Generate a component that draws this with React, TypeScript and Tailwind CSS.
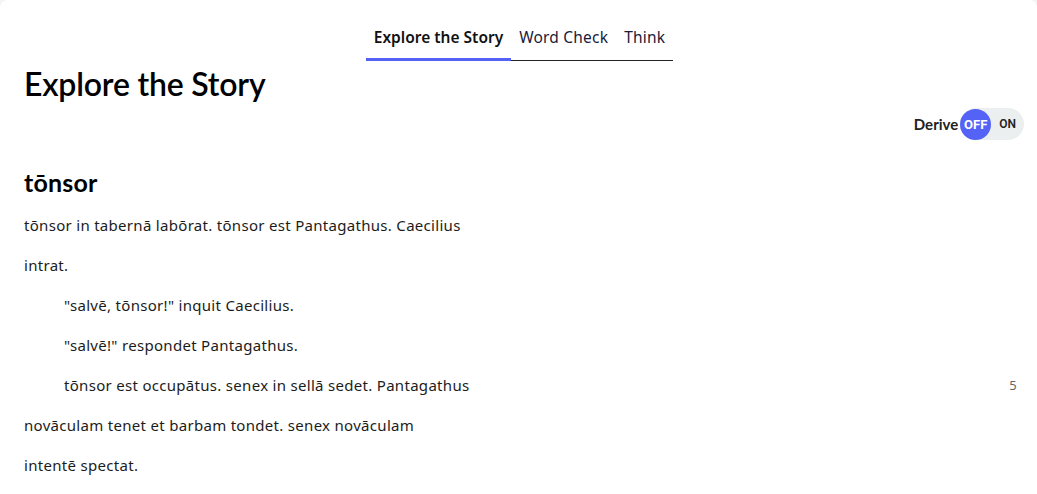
import React from "react";

const lines: { text: string; indent?: boolean; num?: string }[] = [
  { text: "tōnsor in tabernā labōrat. tōnsor est Pantagathus. Caecilius" },
  { text: "intrat." },
  { text: "\"salvē, tōnsor!\" inquit Caecilius.", indent: true },
  { text: "\"salvē!\" respondet Pantagathus.", indent: true },
  { text: "tōnsor est occupātus. senex in sellā sedet. Pantagathus", indent: true, num: "5" },
  { text: "novāculam tenet et barbam tondet. senex novāculam" },
  { text: "intentē spectat." },
];

export default function App() {
  return (
    <div className="w-[1037px] h-[494px] bg-[#f3f4f4] overflow-hidden" style={{ fontFamily: "Lato, 'Open Sans', sans-serif" }}>
      <div className="bg-white w-full h-full rounded-t-[8px] text-[#1b1b1b]">
        <div className="flex justify-center pt-[26px]" style={{ fontFamily: "'Noto Sans', sans-serif" }}>
          <div className="flex border-b border-[#222] ml-[2px]">
            <div className="px-[8px] pb-[9px] border-b-[3px] border-[#5560f5] -mb-[1px] text-[15.5px] font-semibold text-[#111]">Explore the Story</div>
            <div className="px-[8px] pb-[11px] text-[15.5px] text-[#1a1a3a] tracking-[0.2px]">Word Check</div>
            <div className="px-[8px] pb-[11px] text-[15.5px] text-[#1a1a3a] tracking-[0.2px]">Think</div>
          </div>
        </div>
        <div className="px-[24px]">
          <h1 className="text-[32px] font-semibold leading-none mt-[7px] text-black tracking-[-0.2px]">Explore the Story</h1>
          <div className="flex justify-end items-center mt-[8px] -mr-[11px]">
            <span className="text-[15px] font-bold text-[#222] mr-[2px]">Derive</span>
            <div className="flex items-center bg-[#eceff0] rounded-full h-[32px] pr-[8px]">
              <div className="w-[31px] h-[31px] rounded-full bg-[#5463f5] text-white text-[13px] font-bold flex items-center justify-center" style={{ fontFamily: "Roboto, sans-serif" }}>OFF</div>
              <span className="ml-[8px] text-[12px] font-semibold text-[#222]" style={{ fontFamily: "Roboto, sans-serif" }}>ON</span>
            </div>
          </div>
          <h2 className="text-[25px] font-bold leading-none mt-[30px] text-black tracking-[0.2px]">tōnsor</h2>
          <div className="mt-[10px]" style={{ fontFamily: "'Noto Sans', sans-serif" }}>
            {lines.map((l, i) => (
              <div key={i} className="flex justify-between items-center h-[40px] text-[15px] text-[#1c1c1c] tracking-[0.3px]">
                <span className={l.indent ? "pl-[40px]" : ""}>{l.text}</span>
                {l.num && <span className="text-[13px] text-[#666] -mr-[4px]">{l.num}</span>}
              </div>
            ))}
          </div>
        </div>
      </div>
    </div>
  );
}
